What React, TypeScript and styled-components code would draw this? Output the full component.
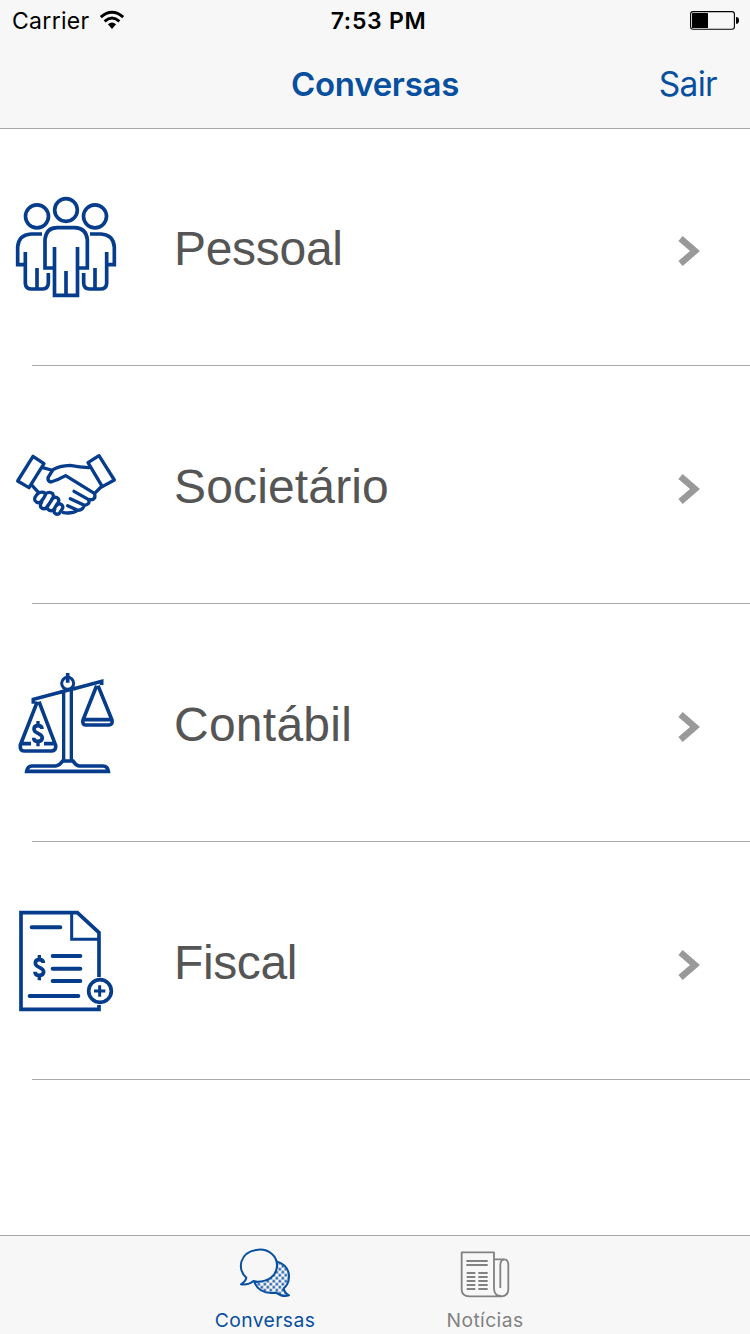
import React from "react";
import styled, { createGlobalStyle } from "styled-components";

const BLUE = "#084f9f";
const NAVY = "#063c8c";
const GREY = "#828282";

const GlobalStyle = createGlobalStyle`
  body { margin: 0; background: #fff; }
  * { box-sizing: border-box; }
`;

const Screen = styled.div`
  width: 750px;
  height: 1334px;
  display: flex;
  flex-direction: column;
  overflow: hidden;
  background: #fff;
  font-family: Inter, "Liberation Sans", sans-serif;
`;

const Header = styled.header`
  height: 129px;
  flex: none;
  background: #f7f7f7;
  border-bottom: 1px solid #a7a7aa;
`;

const StatusBar = styled.div`
  height: 40px;
  padding: 0 11px 0 12px;
  display: grid;
  grid-template-columns: 1fr auto 1fr;
  align-items: center;
  color: #000;
`;

const Carrier = styled.div`
  display: flex;
  align-items: center;
  gap: 9px;
  font-size: 23px;
  line-height: 38px;
  letter-spacing: 0.3px;
`;

const StatusText = styled.span`
  padding-top: 2px;
`;

const Clock = styled.div`
  font-size: 23px;
  font-weight: 600;
  line-height: 38px;
  letter-spacing: 0.7px;
  padding: 2px 0 0 6px;
`;

const BatterySlot = styled.div`
  display: flex;
  justify-content: flex-end;
`;

const NavBar = styled.div`
  height: 88px;
  padding: 0 33px;
  display: grid;
  grid-template-columns: 1fr auto 1fr;
  align-items: center;
  color: ${BLUE};
`;

const Title = styled.h1`
  grid-column: 2;
  margin: 0;
  font-size: 33px;
  font-weight: 600;
  line-height: 88px;
  letter-spacing: -0.3px;
`;

const NavAction = styled.button`
  justify-self: end;
  border: 0;
  padding: 0;
  background: none;
  color: inherit;
  font: inherit;
  font-size: 33.5px;
  line-height: 88px;
  letter-spacing: -0.7px;
`;

const List = styled.main`
  flex: 1;
  margin-top: -1px;
`;

const Row = styled.div`
  height: 238px;
  padding-left: 16px;
  padding-right: 50px;
  display: flex;
  align-items: center;
  background: linear-gradient(#a9a8ab, #a9a8ab) 32px 100% / 718px 1px no-repeat;
`;

const RowLabel = styled.span<{ $tracking: number }>`
  flex: 1;
  padding: 4px 0 0 58px;
  color: #555;
  font-family: "Liberation Sans", Arial, sans-serif;
  font-size: 48px;
  line-height: 56px;
  letter-spacing: ${(p) => p.$tracking}px;
`;

const RowIcon = styled.svg<{ $weight?: number }>`
  width: 100px;
  height: 100px;
  flex: none;
  fill: none;
  stroke: ${NAVY};
  stroke-width: ${(p) => p.$weight ?? 11};
  overflow: visible;
`;

const Chevron = styled.svg`
  width: 22px;
  height: 30px;
  flex: none;
  margin-top: 8px;
`;

const TabBar = styled.nav`
  height: 99px;
  flex: none;
  display: flex;
  justify-content: center;
  gap: 68px;
  background: #f7f7f7;
  border-top: 1px solid #a7a7aa;
`;

const Tab = styled.div<{ $active?: boolean }>`
  width: 152px;
  display: flex;
  flex-direction: column;
  align-items: center;
  color: ${(p) => (p.$active ? BLUE : GREY)};
`;

const TabIcon = styled.svg`
  width: 60px;
  height: 60px;
  margin-top: 9px;
  flex: none;
  fill: none;
  stroke: currentColor;
`;

const TabLabel = styled.span`
  font-size: 19.3px;
  line-height: 24px;
  margin-top: 3px;
  letter-spacing: 0.4px;
`;

const Wifi = () => (
  <svg width="26" height="20" viewBox="0 0 26 20">
    <g fill="none" stroke="#000" strokeWidth="2.9">
      <path d="M1.8 7.2Q13 -2.6 24.2 7.2" />
      <path d="M5.6 11.3Q13 4.9 20.4 11.3" />
    </g>
    <path d="M8.9 14.2Q13 10.8 17.1 14.2L13 18.9Z" fill="#000" />
  </svg>
);

const Battery = () => (
  <svg width="49" height="20" viewBox="0 0 49 20">
    <rect x="0.6" y="1.6" width="43.8" height="17.6" rx="2.5" fill="none" stroke="#000" strokeWidth="1.1" />
    <rect x="2" y="3" width="16" height="15" rx="0.6" />
    <path d="M46 7Q49 7 49 10.4T46 13.8Z" />
  </svg>
);

const People = () => (
  <RowIcon viewBox="30 27 300 300">
    <circle cx="180" cy="66" r="34" />
    <circle cx="93" cy="85" r="34.5" />
    <circle cx="267" cy="85" r="34.5" />
    <path d="M145.500 177V322H214.500V177M180 249V322M145 240H117V154Q121 119 154 119H206Q240 120 244 154V240H215" />
    <path d="M108 138H75Q38 140 35 177V230H58M58 192V286Q59 303 77 303H109Q127 302 127 284V255M93 240V303" />
    <path d="M252 138H285Q322 140 325 177V230H302M302 192V286Q301 303 283 303H251Q233 302 233 284V255M267 240V303" />
  </RowIcon>
);

const Handshake = () => (
  <RowIcon viewBox="30 15 300 300" $weight={10} strokeLinejoin="round" strokeLinecap="round">
    <path d="M81 79L114 101L69 173L35 153ZM279 77L325 150L289 170L246 98Z" />
    <path d="M110 113L136 120M78 166L98 188M288 168L266 190" />
    <path d="M248 113Q222 111 192 106Q160 107 141 119L126 143Q125 155 135 156Q156 150 179 137L265 190Q271 203 259 209H248L204 184" />
    <path d="M248 209Q253 224 235 226L193 206M235 226Q230 241 215 241L185 227M215 241Q198 252 172 248" />
    <path d="M98 188Q82 203 87 212Q94 222 104 216Q115 204 118 195Q118 183 98 188Z" />
    <path d="M118 192Q130 183 140 191Q145 201 137 210L122 233Q112 241 104 231Q102 223 107 216" />
    <path d="M138 207Q148 197 157 206Q161 214 154 221L143 239Q135 247 125 237Q121 231 126 226" />
    <path d="M153 225Q160 218 168 225Q173 231 168 238L160 250Q152 256 145 248Q143 244 146 238" />
  </RowIcon>
);

const Dollar = ({ x, y }: { x: number; y: number }) => (
  <g transform={`translate(${x} ${y})`}>
    <path d="M12 -14Q12 -24 0 -24Q-12 -24 -12 -14Q-12 -6 0 -1Q13 5 13 13Q12 23 0 23Q-13 23 -13 12" />
    <path d="M0 -38V-24M0 23V38" strokeWidth="10" />
  </g>
);

const Scales = () => (
  <RowIcon viewBox="30 33 300 300">
    <circle cx="185" cy="64" r="18" strokeWidth="9" />
    <path d="M185 33V62M82 125V112L168 89M204 80L287 58V69" />
    <path d="M173 84V295M196 84V295" strokeWidth="10" />
    <path d="M164 90L208 79" />
    <path d="M94 119L43 249Q41 267 54 267H137Q151 266 149 250L99 119M47 245H75M114 245H148" />
    <path d="M272 71L231 174Q228 188 239 189H309Q321 188 318 174L276 71M233 173H316" />
    <path d="M62 328H307Q305 312 291 312H220Q209 310 201 297H170Q161 310 149 312H78Q64 313 62 328Z" />
    <Dollar x={96} y={215} />
  </RowIcon>
);

const Invoice = () => (
  <RowIcon viewBox="30 33 300 300">
    <path d="M279 231V98L214 38H45V328H279V315" />
    <path d="M197 38V118H279" strokeWidth="9" />
    <path d="M77 82H163M140 168H223M140 206H223M140 243H223M71 288H217" strokeWidth="12" strokeLinecap="round" />
    <circle cx="282" cy="273" r="34" />
    <path d="M264 273H298M281 256V290" strokeWidth="9" />
    <Dollar x={100} y={203} />
  </RowIcon>
);

const ChatIcon = () => (
  <TabIcon viewBox="105 45 180 180" strokeWidth="6" strokeLinejoin="round">
    <defs>
      <pattern id="dots" x="1" y="5" width="18" height="18" patternUnits="userSpaceOnUse">
        <path d="M1 1h7v7h-7zM10 10h7v7h-7z" fill={BLUE} stroke="none" />
      </pattern>
    </defs>
    <path d="M230 94Q268 106 267 141Q266 164 251 175Q253 188 267 196Q249 203 228 188Q177 194 163 156Q222 151 231 108Z" fill="url(#dots)" />
    <path d="M175 59C207 57 231 78 231 106C230 138 205 155 171 155L160 153Q145 166 123 163Q138 153 139 143C110 119 118 64 175 59Z" fill="#f7f7f7" />
  </TabIcon>
);

const NewsIcon = () => (
  <TabIcon viewBox="75 45 180 180" strokeWidth="5.500" strokeLinejoin="round">
    <path d="M192 88V67H95V180Q96 199 118 199H216Q234 197 235 179V103Q234 88 222 88H192V176Q193 198 214 198" />
    <path d="M211 174V104Q212 89 222 89" />
    <path d="M109 93H173M109 105H173M110 129H136M145 129H173M110 141H136M145 141H173M110 153H136M145 153H173M110 165H136M145 165H173M110 177H136M145 177H173" />
  </TabIcon>
);

const rows = [
  { label: "Pessoal", Icon: People, tracking: -0.3 },
  { label: "Societário", Icon: Handshake, tracking: 0.15 },
  { label: "Contábil", Icon: Scales, tracking: 0.25 },
  { label: "Fiscal", Icon: Invoice, tracking: -0.4 },
];

export default function App() {
  return (
    <Screen>
      <GlobalStyle />
      <Header>
        <StatusBar>
          <Carrier>
            <StatusText>Carrier</StatusText>
            <Wifi />
          </Carrier>
          <Clock>7:53 PM</Clock>
          <BatterySlot>
            <Battery />
          </BatterySlot>
        </StatusBar>
        <NavBar>
          <Title>Conversas</Title>
          <NavAction>Sair</NavAction>
        </NavBar>
      </Header>
      <List>
        {rows.map(({ label, Icon, tracking }) => (
          <Row key={label}>
            <Icon />
            <RowLabel $tracking={tracking}>{label}</RowLabel>
            <Chevron viewBox="0 0 22 30">
              <path d="M2.500 2.500L17 15L2.500 27.500" fill="none" stroke="#999" strokeWidth="6.500" />
            </Chevron>
          </Row>
        ))}
      </List>
      <TabBar>
        <Tab $active>
          <ChatIcon />
          <TabLabel>Conversas</TabLabel>
        </Tab>
        <Tab>
          <NewsIcon />
          <TabLabel>Notícias</TabLabel>
        </Tab>
      </TabBar>
    </Screen>
  );
}
